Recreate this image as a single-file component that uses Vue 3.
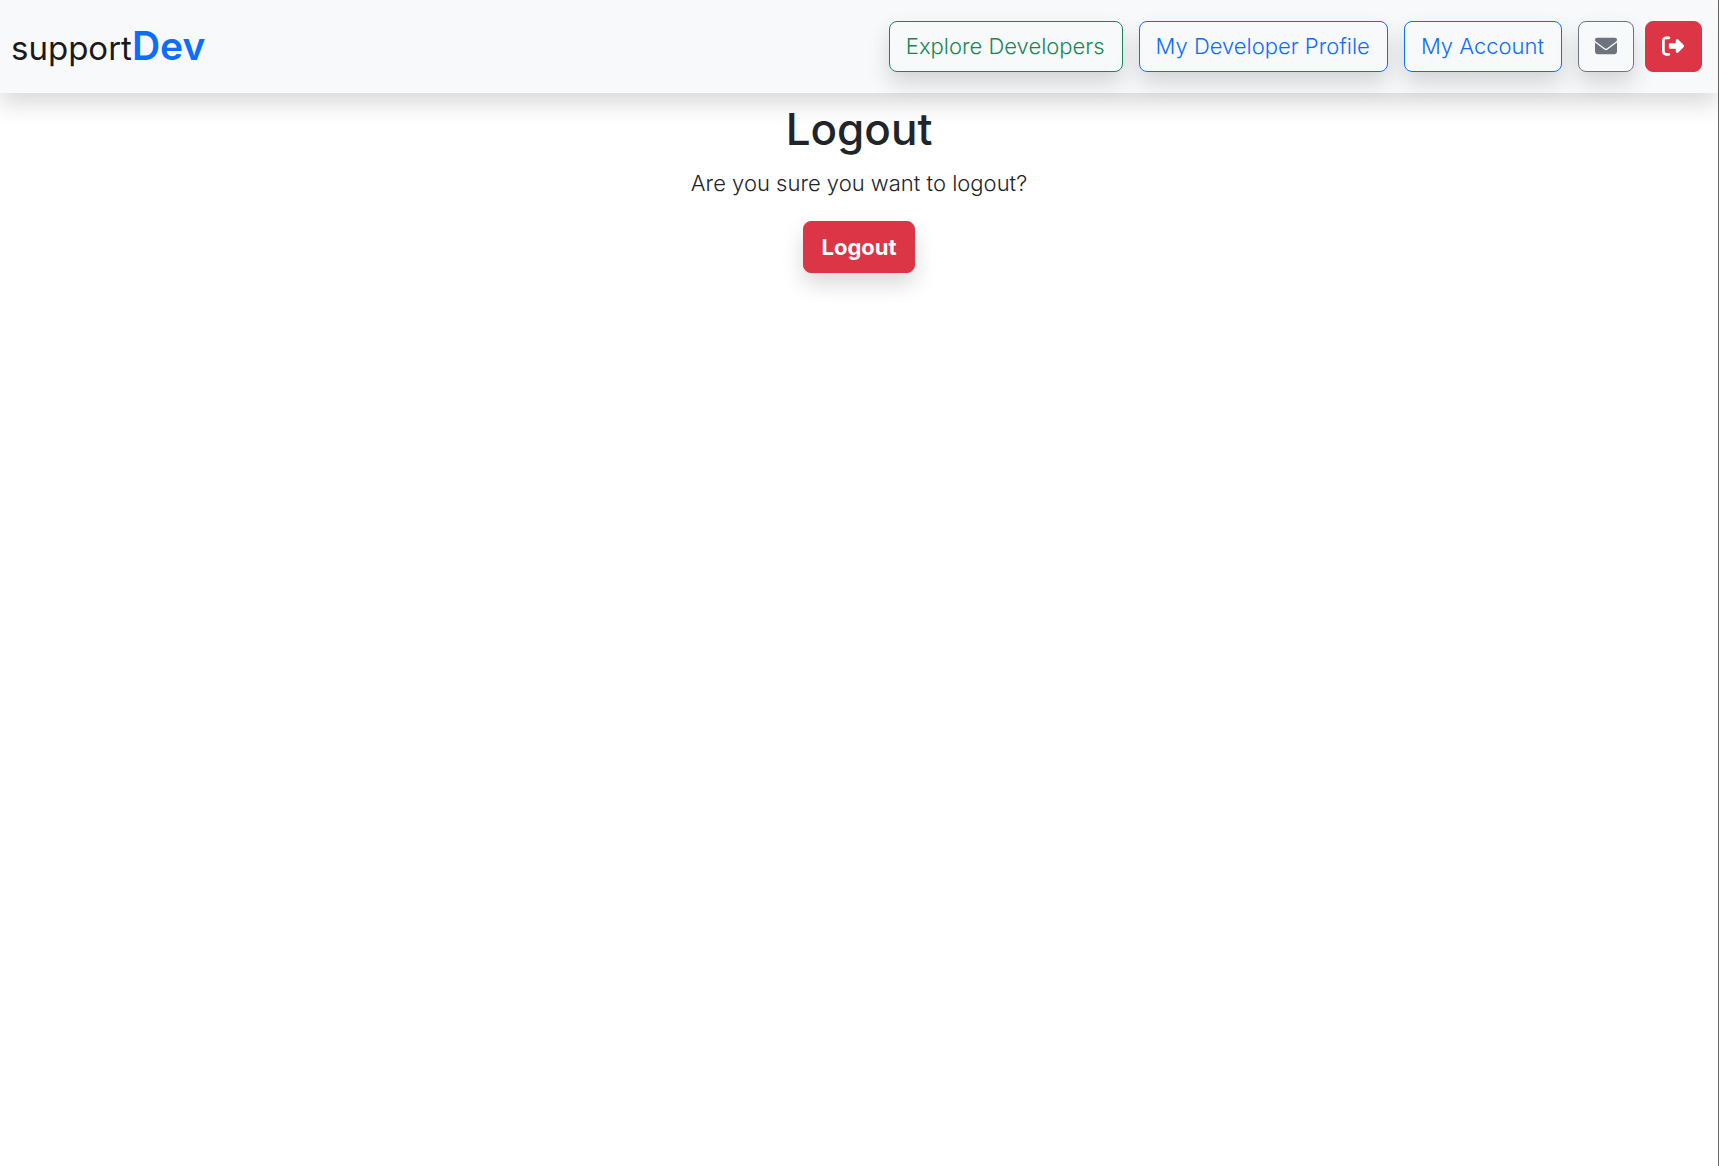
<script setup>
const links = [
  { label: 'Explore Developers', tone: 'green' },
  { label: 'My Developer Profile', tone: 'blue' },
  { label: 'My Account', tone: 'blue' },
]
</script>

<template>
  <div class="page">
    <header class="navbar">
      <a class="brand" href="#">support<strong>Dev</strong></a>
      <nav class="links">
        <a v-for="link in links" :key="link.label" class="btn outline text" :class="link.tone" href="#">{{ link.label }}</a>
        <div class="icons">
          <a class="btn outline gray" href="#" aria-label="Messages">
            <svg viewBox="0 0 512 512" aria-hidden="true">
              <path d="M48 64C21.500 64 0 85.500 0 112c0 15.100 7.100 29.300 19.200 38.400L236.800 313.600c11.400 8.500 27 8.500 38.400 0L492.800 150.400c12.100-9.100 19.200-23.300 19.200-38.400c0-26.500-21.500-48-48-48H48zM0 176V384c0 35.300 28.700 64 64 64H448c35.300 0 64-28.700 64-64V176L294.400 339.200c-22.800 17.100-54 17.100-76.800 0L0 176z" />
            </svg>
          </a>
          <a class="btn danger" href="#" aria-label="Log out">
            <svg viewBox="0 0 512 512" aria-hidden="true">
              <path d="M377.900 105.900L500.700 228.700c7.200 7.200 11.300 17.100 11.300 27.300s-4.100 20.100-11.300 27.300L377.900 406.100c-6.400 6.400-15 9.900-24 9.900c-18.700 0-33.900-15.200-33.900-33.900l0-62.100-128 0c-17.700 0-32-14.300-32-32l0-64c0-17.700 14.300-32 32-32l128 0 0-62.100c0-18.700 15.200-33.900 33.900-33.900c9 0 17.600 3.600 24 9.900zM160 96L96 96c-17.700 0-32 14.300-32 32l0 256c0 17.700 14.300 32 32 32l64 0c17.700 0 32 14.300 32 32s-14.300 32-32 32l-64 0c-53 0-96-43-96-96L0 128C0 75 43 32 96 32l64 0c17.700 0 32 14.300 32 32s-14.300 32-32 32z" />
            </svg>
          </a>
        </div>
      </nav>
    </header>
    <main>
      <h1>Logout</h1>
      <p>Are you sure you want to logout?</p>
      <form @submit.prevent>
        <button class="btn danger submit" type="submit">Logout</button>
      </form>
    </main>
  </div>
</template>

<style>
body {
  margin: 0;
  background: #fff;
}
</style>

<style scoped>
.page {
  box-sizing: border-box;
  min-height: 100vh;
  border-right: 1px solid #666;
  font: 300 22px/33px Inter, sans-serif;
  color: #212529;
}

.navbar {
  display: flex;
  align-items: center;
  justify-content: space-between;
  padding: 21px 16px 21px 11px;
  background: #f8f9fb;
  box-shadow: 0 11px 22px rgba(0, 0, 0, 0.15);
}

.brand {
  font-size: 33px;
  font-weight: 400;
  line-height: 48px;
  color: #1a1a1a;
  text-decoration: none;
}

.brand strong {
  font-size: 39px;
  font-weight: 600;
  color: #0d6efd;
}

.links {
  display: flex;
  gap: 16px;
}

.icons {
  display: flex;
  gap: 11px;
}

.btn {
  box-sizing: border-box;
  display: flex;
  align-items: center;
  padding: 8px 16px;
  border: 1px solid;
  border-radius: 8px;
  line-height: 33px;
  text-decoration: none;
}

.text {
  padding-right: 17px;
}

.outline {
  box-shadow: 0 11px 22px rgba(0, 0, 0, 0.15);
}

.green {
  color: #198754;
}

.blue {
  color: #0d6efd;
}

.gray {
  color: #6c757d;
}

.danger {
  color: #fff;
  background: #dc3545;
  border-color: #dc3545;
}

.icons .danger {
  padding-right: 17px;
}

.btn svg {
  display: block;
  width: 22px;
  height: 22px;
  margin-bottom: 2px;
  fill: currentColor;
}

main {
  display: flex;
  flex-direction: column;
  align-items: center;
  padding-top: 11px;
  text-align: center;
}

h1 {
  margin: 0 0 13px;
  font-size: 44px;
  font-weight: 500;
  line-height: 50px;
}

p {
  margin: 0 0 21px;
}

.submit {
  padding: 9px 17px;
  font-family: inherit;
  font-size: 22px;
  font-weight: 700;
  line-height: 32px;
  box-shadow: 0 11px 22px rgba(0, 0, 0, 0.15);
}
</style>
